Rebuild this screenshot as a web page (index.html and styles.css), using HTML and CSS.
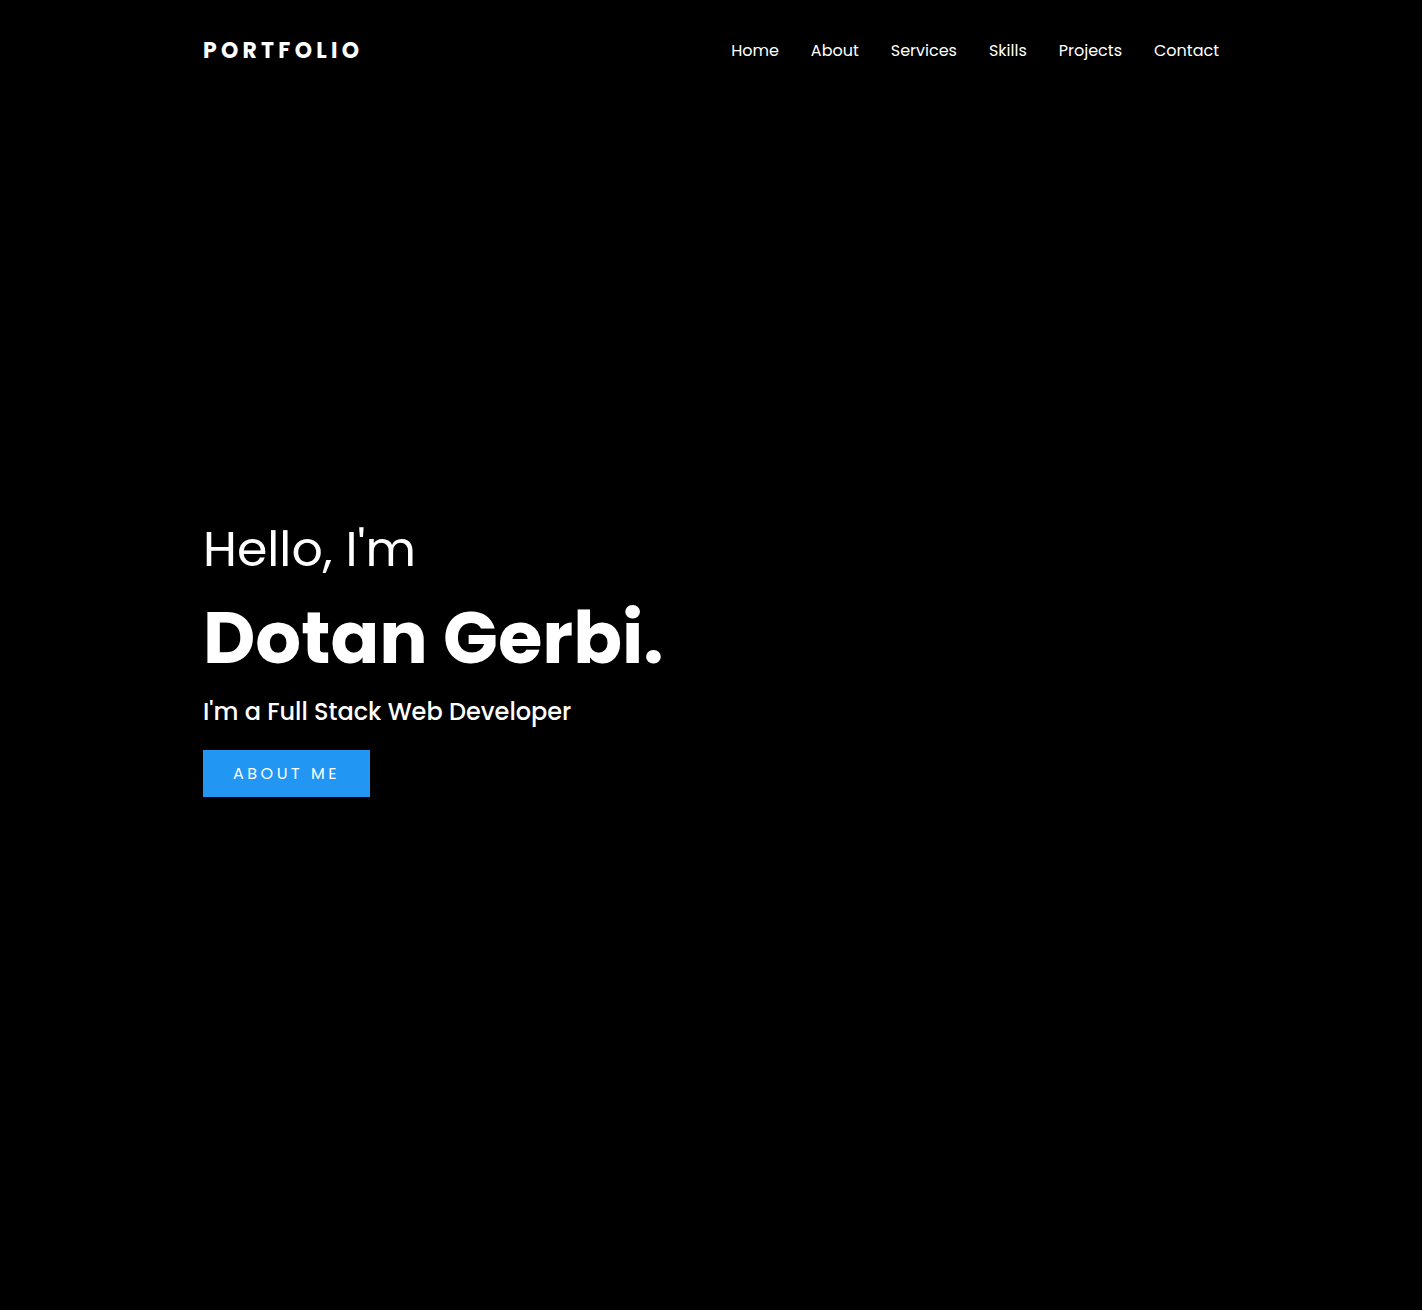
FILE: index.html
```html
<!DOCTYPE html>
<html lang="en">
<head>
<meta charset="utf-8">
<title>Portfolio</title>
<link rel="stylesheet" href="styles.css">
</head>
<body>
<header class="site-header">
  <div class="container header-inner">
    <a class="logo" href="#">PORTFOLIO</a>
    <nav class="nav">
      <a href="#">Home</a>
      <a href="#">About</a>
      <a href="#">Services</a>
      <a href="#">Skills</a>
      <a href="#">Projects</a>
      <a href="#">Contact</a>
    </nav>
  </div>
</header>
<main>
  <section class="hero">
    <div class="container hero-content">
      <h2 class="hello">Hello, I'm</h2>
      <h1 class="name">Dotan Gerbi.</h1>
      <p class="role">I'm a Full Stack Web Developer</p>
      <a class="btn" href="#">ABOUT ME</a>
    </div>
  </section>
</main>
</body>
</html>
```
FILE: styles.css
```css
* { box-sizing: border-box; }
html, body { margin: 0; padding: 0; }
body {
  background: #000;
  color: #fff;
  font-family: "Poppins", Inter, "Noto Sans", sans-serif;
}
a { color: inherit; text-decoration: none; }
.container {
  width: 1016px;
  margin: 0 auto;
}
.site-header {
  position: absolute;
  top: 0;
  left: 0;
  right: 0;
  z-index: 2;
}
.header-inner {
  display: flex;
  align-items: center;
  justify-content: space-between;
  height: 100px;
}
.logo {
  font-size: 22px;
  font-weight: 700;
  letter-spacing: 4.25px;
}
.nav {
  display: flex;
  gap: 32px;
}
.nav a {
  font-size: 16px;
  font-weight: 400;
}
.hero {
  min-height: 100vh;
  display: flex;
  align-items: center;
}
.hero-content {
  display: flex;
  flex-direction: column;
  align-items: flex-start;
  padding-top: 2px;
}
.hello {
  margin: 0;
  font-size: 49px;
  font-weight: 400;
  line-height: 1.4;
}
.name {
  margin: 5px 0 0;
  font-size: 72px;
  font-weight: 700;
  line-height: 1.4;
}
.role {
  margin: 6px 0 22px;
  font-size: 24px;
  font-weight: 500;
  line-height: 1.4;
}
.btn {
  display: inline-block;
  background: #2196f3;
  color: #fff;
  padding: 13px 30px;
  font-size: 16px;
  font-weight: 400;
  letter-spacing: 3.5px;
  line-height: 21px;
}
```
